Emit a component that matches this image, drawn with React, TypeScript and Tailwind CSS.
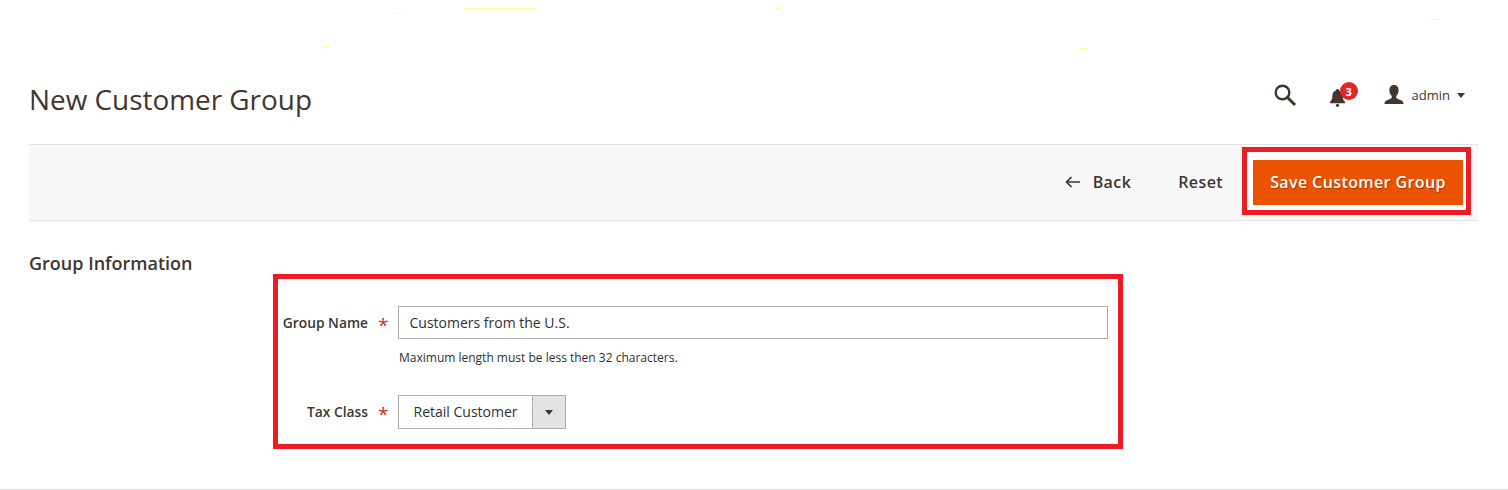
import React from "react";

const streaks = [
  "left-[465px] top-[8px] w-[71px]",
  "left-[395px] top-[13px] w-[8px]",
  "left-[322px] top-[46px] w-[8px]",
  "left-[775px] top-[8px] w-[6px]",
  "left-[1080px] top-[48px] w-[7px]",
  "left-[1430px] top-[19px] w-[9px]",
];

function Req() {
  return <span className="ml-[10px] w-[20px] text-[#e22626] text-[19px] font-normal leading-none pt-[6px]">*</span>;
}

export default function App() {
  return (
    <div
      className="relative h-[490px] w-[1508px] overflow-hidden bg-white text-[#41362f] border-b border-[#dfdfdf]"
      style={{ fontFamily: '"Open Sans", sans-serif' }}
    >
      {streaks.map((s) => (
        <div key={s} className={`absolute h-px bg-[#fffb9c] ${s}`} />
      ))}

      <header className="flex h-[144px] items-start justify-between pl-[29px] pr-[43px] pt-[80px]">
        <h1 className="text-[27.9px] leading-[38px] font-normal text-[#41362f]">New Customer Group</h1>
        <div className="flex items-center mt-[2px]">
          <svg width="24" height="24" viewBox="0 0 24 24" className="mr-[32px] -mt-[8px]">
            <circle cx="9.5" cy="9.5" r="6.8" fill="none" stroke="#41362f" strokeWidth="2.4" />
            <path d="M14.5 14.5 L21 21" stroke="#41362f" strokeWidth="3" strokeLinecap="square" />
          </svg>
          <div className="relative mr-[26px] h-[34px] w-[29px]">
            <svg width="17" height="20" viewBox="0 0 18 20" className="absolute left-0 top-[6px]">
              <path d="M9 0.5c1 0 1.6.7 1.6 1.5 2.7.8 3.9 3 3.9 6 0 3 .8 4.8 2.5 6.2v1.3H1v-1.3C2.700 12.800 3.500 11 3.500 8c0-3 1.200-5.200 3.900-6C7.400 1.200 8 .5 9 .5z" fill="#41362f" />
              <circle cx="9" cy="17.800" r="1.700" fill="#41362f" />
            </svg>
            <span className="absolute left-[11px] top-0 flex h-[18px] w-[18px] items-center justify-center rounded-full bg-[#e22626] text-[11px] font-bold leading-none text-white">3</span>
          </div>
          <svg width="20" height="20" viewBox="0 0 20 20" className="mr-[8px] -mt-[8px]">
            <path d="M10 0c3 0 4.600 2.200 4.600 5.200 0 2.400-1 4.600-2.400 5.800v1.400c0 1 3 1.800 5.300 3 1.300.7 1.900 1.700 2.100 3.600H.4c.2-1.900.8-2.900 2.100-3.600 2.300-1.200 5.300-2 5.300-3V11C6.400 9.800 5.400 7.600 5.400 5.200 5.400 2.200 7 0 10 0z" fill="#41362f" />
          </svg>
          <span className="text-[13px] leading-[18px] -mt-[8px] text-[#41362f]">admin</span>
          <svg width="8" height="5" viewBox="0 0 8 5" className="ml-[7px] -mt-[8px]">
            <path d="M0 0h8L4 5z" fill="#41362f" />
          </svg>
        </div>
      </header>

      <div className="mx-[29px] flex h-[77px] w-[1449px] items-center justify-end border-y border-[#e3e3e3] bg-[#f8f8f8] pr-[7px]">
        <svg width="16" height="12" viewBox="0 0 16 12" className="mr-[12px] -mt-[2px]">
          <path d="M15 6H2M6.500 1 1.500 6l5 5" fill="none" stroke="#41362f" strokeWidth="1.700" />
        </svg>
        <span className="mr-[47px] -mt-[1px] text-[16px] font-semibold tracking-[0.4px] text-[#41362f]">Back</span>
        <span className="mr-[19px] -mt-[1px] text-[16px] font-semibold tracking-[0.4px] text-[#41362f]">Reset</span>
        <div className="self-start mt-[2px] border-[5px] border-[#ed1c24] bg-white pl-[6px] pr-[3px] pt-[8px] pb-[5px]">
          <button className="flex h-[45px] w-[210px] items-center justify-center bg-[#eb5202] pb-[2px] text-[16px] font-semibold tracking-[0.4px] text-white [text-shadow:1px_1px_1px_rgba(0,0,0,0.3)]">
            Save Customer Group
          </button>
        </div>
      </div>

      <section className="flex items-start pl-[29px] pt-[30px]">
        <h2 className="w-[244px] text-[18px] leading-[24px] font-semibold text-[#41362f]">Group Information</h2>
        <div className="mt-[23px] h-[175px] w-[850px] border-[5px] border-[#ed1c24] bg-white pt-[27px]">
          <div className="flex">
            <div className="flex h-[33px] w-[120px] items-center justify-end">
              <span className="mt-[2px] whitespace-nowrap text-[13.8px] font-semibold text-[#41362f]">Group Name</span>
              <Req />
            </div>
            <div className="w-[710px]">
              <div className="flex h-[33px] items-center border border-[#adadad] px-[10.5px] text-[14px] text-[#303030]">
                Customers from the U.S.
              </div>
              <p className="mt-[10px] pl-px text-[12px] leading-[18px] text-[#303030]">Maximum length must be less then 32 characters.</p>
            </div>
          </div>
          <div className="mt-[28px] flex">
            <div className="flex h-[34px] w-[120px] items-center justify-end pb-[2px]">
              <span className="mt-[2px] whitespace-nowrap text-[13.8px] font-semibold text-[#41362f]">Tax Class</span>
              <Req />
            </div>
            <div className="flex h-[34px] w-[168px] border border-[#adadad] text-[14px] text-[#303030]">
              <div className="flex flex-1 items-center pl-[14.5px] pb-px">Retail Customer</div>
              <div className="flex w-[33px] items-center justify-center border-l border-[#adadad] bg-[#e3e3e3]">
                <svg width="8" height="5" viewBox="0 0 8 5"><path d="M0 0h8L4 5z" fill="#41362f" /></svg>
              </div>
            </div>
          </div>
        </div>
      </section>
    </div>
  );
}
